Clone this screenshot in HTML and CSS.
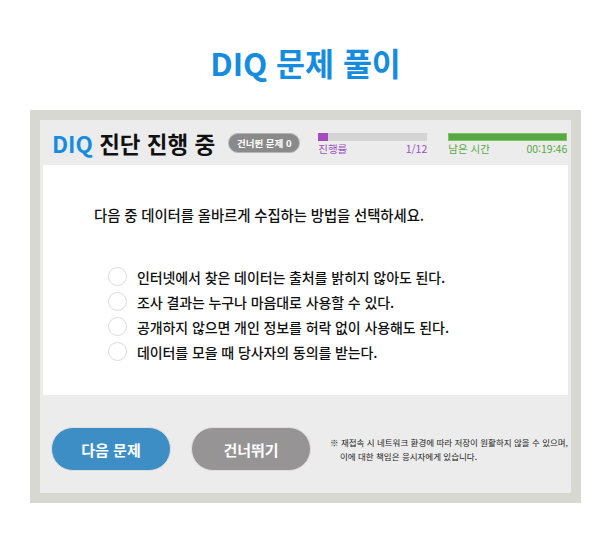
FILE: index.html
```html
<!DOCTYPE html>
<html lang="ko">
<head>
<meta charset="utf-8">
<title>DIQ 문제 풀이</title>
<link rel="stylesheet" href="styles.css">
</head>
<body>
  <h1 class="page-title">DIQ 문제 풀이</h1>
  <div class="frame">
    <div class="panel">
      <div class="header">
        <div class="test-title"><span class="brand">DIQ</span> 진단 진행 중</div>
        <div class="skip-badge">건너뛴 문제 0</div>
        <div class="meter meter-progress">
          <div class="bar"><div class="fill" style="width:9%"></div></div>
          <div class="meter-labels"><span>진행률</span><span>1/12</span></div>
        </div>
        <div class="meter meter-time">
          <div class="bar"><div class="fill" style="width:100%"></div></div>
          <div class="meter-labels"><span>남은 시간</span><span>00:19:46</span></div>
        </div>
      </div>
      <div class="card">
        <p class="question">다음 중 데이터를 올바르게 수집하는 방법을 선택하세요.</p>
        <ul class="options">
          <li class="option"><span class="radio"></span>인터넷에서 찾은 데이터는 출처를 밝히지 않아도 된다.</li>
          <li class="option"><span class="radio"></span>조사 결과는 누구나 마음대로 사용할 수 있다.</li>
          <li class="option"><span class="radio"></span>공개하지 않으면 개인 정보를 허락 없이 사용해도 된다.</li>
          <li class="option"><span class="radio"></span>데이터를 모을 때 당사자의 동의를 받는다.</li>
        </ul>
      </div>
      <div class="footer">
        <button class="btn btn-next">다음 문제</button>
        <button class="btn btn-skip">건너뛰기</button>
        <p class="notice">※ 재접속 시 네트워크 환경에 따라 저장이 원활하지 않을 수 있으며,<br><span class="indent">이에 대한 책임은 응시자에게 있습니다.</span></p>
      </div>
    </div>
  </div>
</body>
</html>
```

FILE: styles.css
```css
* { box-sizing: border-box; }
body {
  margin: 0;
  background: #fff;
  font-family: "Noto Sans CJK KR", "Noto Sans", sans-serif;
  color: #111;
}
.page-title {
  margin: 0;
  height: 110px;
  padding-top: 40px;
  text-align: center;
  font-size: 31.5px;
  line-height: 44px;
  font-weight: 700;
  color: #168ce0;
}
.frame {
  margin-left: 30px;
  width: 551px;
  height: 393px;
  border: 10px solid #d8d8d3;
  background: #ececec;
}
.panel {
  display: flex;
  flex-direction: column;
  height: 100%;
}
.header {
  height: 45px;
  display: flex;
  align-items: center;
  padding-left: 12px;
}
.test-title {
  font-size: 22.5px;
  font-weight: 700;
  color: #111;
  line-height: 30px;
}
.brand { color: #168ce0; }
.skip-badge {
  margin-left: 13px;
  width: 72px;
  height: 20px;
  border-radius: 10px;
  background: #8a8a8a;
  border: 1px solid #b5b5b5;
  color: #fff;
  font-size: 9.5px;
  font-weight: 700;
  line-height: 18px;
  text-align: center;
}
.meter {
  align-self: flex-start;
  margin-top: 13px;
  display: flex;
  flex-direction: column;
}
.meter-progress { margin-left: 18px; width: 109px; color: #9b4fbf; }
.meter-time { margin-left: 21px; width: 119px; color: #5aa844; }
.bar {
  height: 8px;
  background: #d4d4d4;
  overflow: hidden;
}
.meter-progress .fill { height: 100%; background: #a24cc0; }
.meter-time .bar { border: 1px solid #7cc06a; }
.meter-time .fill { height: 100%; background: #57a841; }
.meter-labels {
  display: flex;
  justify-content: space-between;
  font-size: 10.5px;
  line-height: 12px;
  margin-top: 2px;
}
.card {
  height: 230px;
  margin: 0 3px 0 3px;
  background: #fff;
  padding: 40px 0 0 51px;
}
.question {
  margin: 0;
  font-size: 14.4px;
  font-weight: 500;
  line-height: 20px;
  letter-spacing: -0.1px;
}
.options {
  list-style: none;
  margin: 39px 0 0 0;
  padding: 0 0 0 14px;
}
.option {
  display: flex;
  align-items: center;
  height: 25px;
  font-size: 14px;
  font-weight: 500;
  letter-spacing: -0.1px;
}
.radio {
  width: 19px;
  height: 19px;
  border-radius: 50%;
  border: 1px solid #dcdcdc;
  background: #fff;
  margin-right: 10px;
  flex: none;
}
.footer {
  flex: 1;
  display: flex;
  align-items: center;
  padding: 10px 0 0 11px;
}
.btn {
  width: 120px;
  height: 44px;
  border-radius: 22px;
  border: 1px solid #dedede;
  color: #fff;
  font-family: inherit;
  font-size: 15px;
  font-weight: 700;
  padding: 0;
}
.btn-next { background: #3d8ec4; }
.btn-skip { background: #969494; margin-left: 20px; }
.notice {
  margin: 0 0 0 19px;
  font-size: 8.5px;
  line-height: 14px;
  color: #222;
}
.indent { padding-left: 10px; }
```
